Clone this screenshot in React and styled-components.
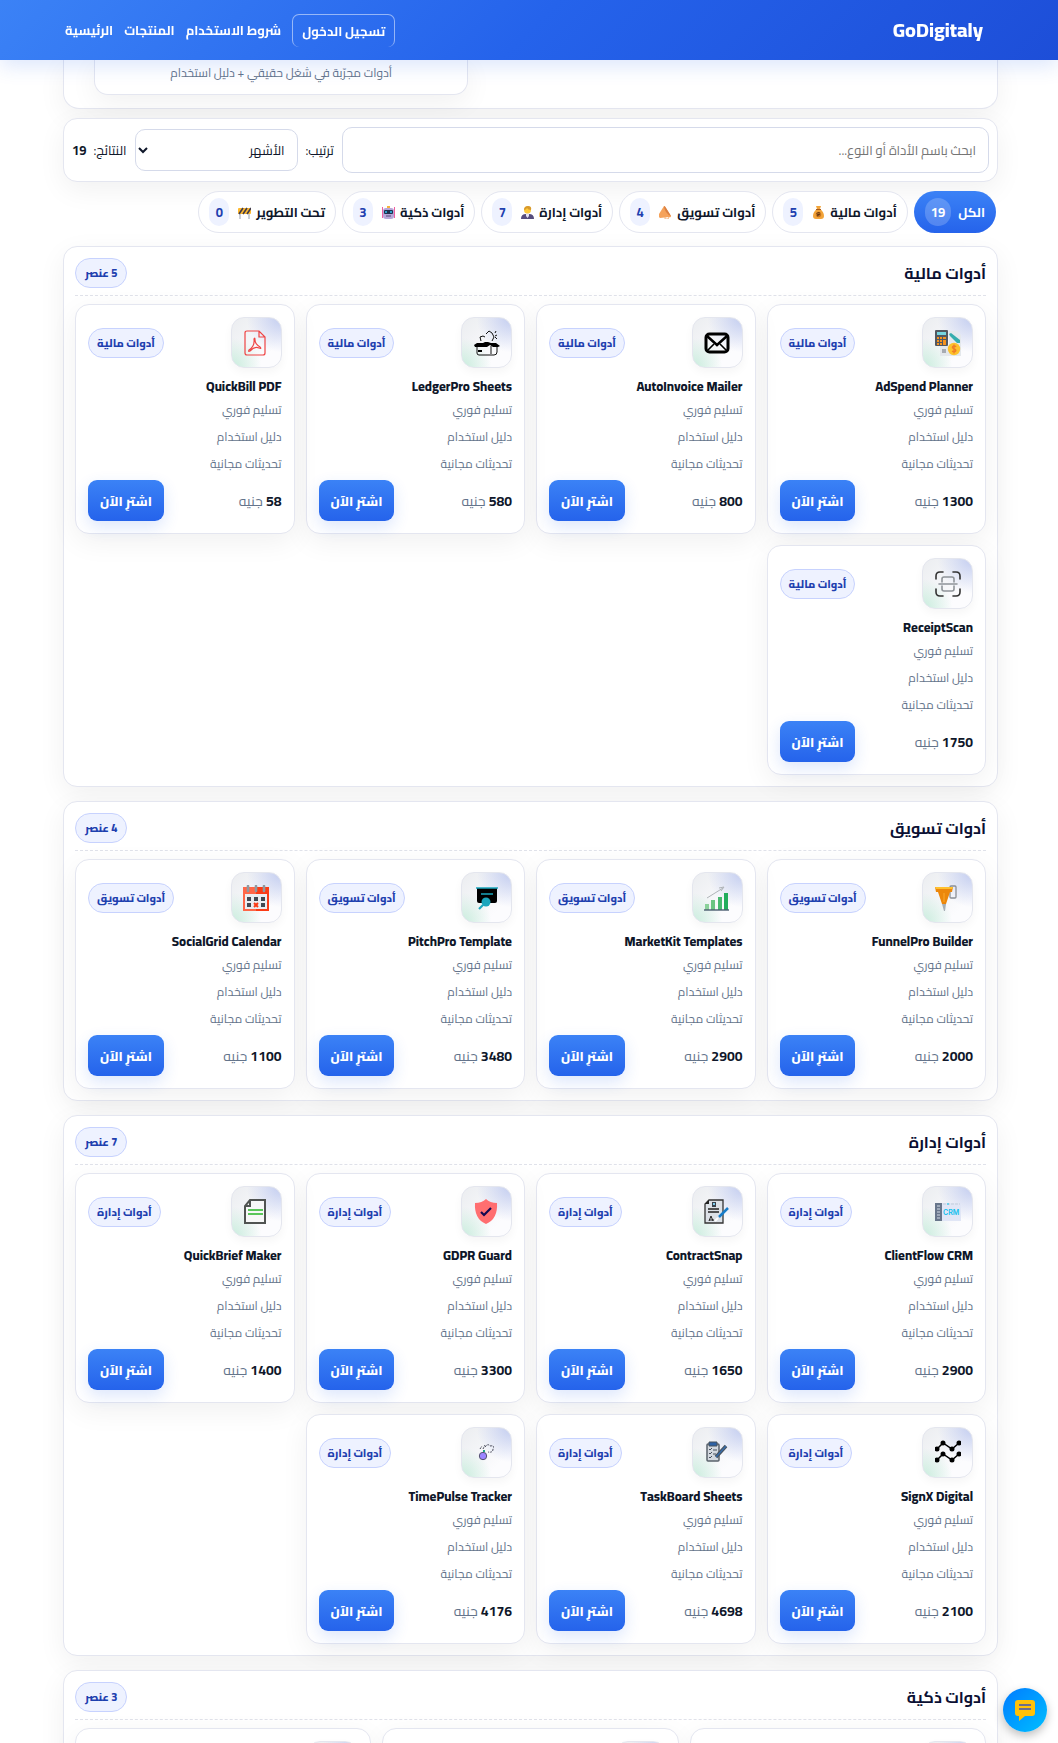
import React, { useState } from "react";
import styled, { createGlobalStyle, css } from "styled-components";

const GlobalStyle = createGlobalStyle`
  * { box-sizing: border-box; }
  body {
    margin: 0;
    background: #fff;
    color: #0f172a;
    font-family: Cairo, "Noto Sans Arabic", Roboto, "DejaVu Sans", sans-serif;
    font-size: 14px;
    line-height: 24px;
  }
  button, input, select { font: inherit; color: inherit; }
`;

// ── Page and header ──────────────────────────────────────────────────────────

const Page = styled.div`
  height: 100vh;
  overflow-y: auto;
  scrollbar-width: none;
`;

const Header = styled.header`
  position: sticky;
  top: 0;
  z-index: 5;
  height: 60px;
  padding: 0 75px 0 65px;
  display: flex;
  align-items: center;
  justify-content: space-between;
  background: linear-gradient(135deg, #3b82f6, #2563eb 50%, #1d4ed8);
  box-shadow: 0 6px 20px rgba(37, 99, 235, 0.16);
`;

const Brand = styled.a`
  color: #fff;
  font-size: 20px;
  font-weight: 800;
  line-height: 26px;
  text-decoration: none;
`;

const Nav = styled.nav`
  display: flex;
  flex-direction: row-reverse;
  align-items: center;
  gap: 11px;
`;

const NavLink = styled.a`
  color: #fff;
  font-size: 13px;
  font-weight: 700;
  text-decoration: none;
  white-space: nowrap;

  ${({ $boxed }) =>
    $boxed &&
    css`
      height: 33px;
      padding: 4px 9px;
      border: 1px solid rgba(255, 255, 255, 0.5);
      border-bottom: 0;
      border-radius: 7px;
    `}
`;

const Main = styled.main`
  display: flex;
  flex-direction: column;
  padding: 0 60px 24px 63px;
`;

// ── Hero ─────────────────────────────────────────────────────────────────────

const panel = css`
  background: #fff;
  border: 1px solid #e4e6f0;
  box-shadow: 0 8px 28px rgba(0, 0, 0, 0.06);
`;

const Hero = styled.section`
  ${panel}
  border-top: 0;
  border-radius: 0 0 16px 16px;
  padding: 0 30px 13px;
  display: grid;
  grid-template-columns: 4fr 3fr;
`;

const HeroNote = styled.p`
  ${panel}
  grid-column: 2;
  margin: 0;
  padding: 1px 12px 9px;
  border-top: 0;
  border-radius: 0 0 14px 14px;
  text-align: center;
  font-size: 12px;
  color: #64748b;
`;

// ── Toolbar and filters ──────────────────────────────────────────────────────

const Toolbar = styled.form`
  ${panel}
  margin-top: 9px;
  padding: 8px;
  display: flex;
  align-items: center;
  gap: 8px;
  border-radius: 14px;
  font-size: 13px;
  white-space: nowrap;
`;

const SearchBox = styled.input`
  flex: 1;
  min-width: 0;
  height: 46px;
  padding: 0 12px;
  border: 1px solid #d5daea;
  border-radius: 10px;
  background: #fff;

  &::placeholder { color: #757575; }
`;

const SortSelect = styled.select`
  width: 163px;
  height: 42px;
  padding: 0 8px;
  border: 1px solid #d5daea;
  border-radius: 10px;
  background: #fff;
`;

const Results = styled.span`
  display: flex;
  gap: 7px;
`;

const Filters = styled.div`
  display: flex;
  gap: 6px;
  margin: 9px 0 13px;
  padding: 0 2px;
`;

const Chip = styled.button`
  height: 42px;
  padding: 0 10px;
  display: flex;
  align-items: center;
  gap: 9px;
  border: 1px solid #e4e6f0;
  border-radius: 21px;
  background: #fff;
  font-size: 13px;
  font-weight: 700;
  white-space: nowrap;
  cursor: pointer;

  ${({ $active }) =>
    $active &&
    css`
      gap: 7px;
      border-color: transparent;
      color: #fff;
      background: linear-gradient(#3b82f6, #2563eb) border-box;
    `}
`;

const ChipLabel = styled.span`
  display: flex;
  align-items: center;
  gap: 5px;
`;

const ChipCount = styled.span`
  min-width: 20px;
  padding: 2px 6px;
  border-radius: 14px;
  font-size: 13px;
  text-align: center;
  color: ${({ $active }) => ($active ? "#fff" : "#1e40af")};
  background: ${({ $active }) => ($active ? "rgba(255, 255, 255, 0.2)" : "#eef2ff")};
`;

// ── Sections and cards ───────────────────────────────────────────────────────

const Section = styled.section`
  ${panel}
  padding: 11px;
  border-radius: 14px;

  & + & { margin-top: 14px; }
`;

const SectionHead = styled.div`
  display: flex;
  align-items: center;
  justify-content: space-between;
  padding-bottom: 7px;
  margin-bottom: 8px;
  border-bottom: 1px dashed #e0e2ea;
`;

const SectionTitle = styled.h2`
  margin: 0;
  font-size: 16px;
  font-weight: 700;
  color: #0b1033;
`;

const Badge = styled.span`
  padding: 2px 8px;
  border: 1px solid #c7d2fe;
  border-radius: 15px;
  background: #eef2ff;
  color: #1e40af;
  font-size: 11px;
  font-weight: 800;
  white-space: nowrap;
`;

const CountBadge = styled(Badge)`
  padding: 2px 9px;
`;

const Grid = styled.div`
  display: grid;
  grid-template-columns: repeat(auto-fit, minmax(210px, 1fr));
  gap: 11px;
`;

const Card = styled.article`
  ${panel}
  padding: 12px;
  border-radius: 14px;
`;

const Row = styled.div`
  display: flex;
  align-items: center;
  justify-content: space-between;
`;

const IconTile = styled.div`
  width: 51px;
  height: 51px;
  display: grid;
  place-items: center;
  border: 1px solid #e4e6ee;
  border-radius: 13px;
  background:
    radial-gradient(70% 70% at 100% 0, #c3cdf0, transparent),
    radial-gradient(60% 60% at 0 100%, #c9eddd, transparent),
    linear-gradient(135deg, #ebedf0, #fcfcfe 75%);
  box-shadow: 0 4px 10px rgba(0, 0, 0, 0.04);
`;

const CardTitle = styled.h3`
  margin: 8px 0 0;
  font-size: 13px;
  font-weight: 800;
  line-height: 20px;
`;

const Features = styled.ul`
  margin: 0 0 3px;
  padding: 0;
  list-style: none;
  font-size: 12px;
  line-height: 27px;
  color: #64748b;
`;

const Price = styled.span`
  font-size: 14px;
  color: #64748b;

  strong { color: #0f172a; }
`;

const BuyButton = styled.button`
  height: 41px;
  padding: 0 12px;
  border: 0;
  border-radius: 9px;
  background: linear-gradient(#3b82f6, #2563eb);
  box-shadow: 0 6px 16px rgba(37, 99, 235, 0.16);
  color: #fff;
  font-size: 13px;
  font-weight: 800;
  cursor: pointer;
`;

const ChatButton = styled.button`
  position: fixed;
  right: 11px;
  bottom: 11px;
  z-index: 6;
  width: 44px;
  height: 44px;
  display: grid;
  place-items: center;
  border: 0;
  border-radius: 50%;
  background: linear-gradient(135deg, #007bff, #00bfff);
  box-shadow: 0 4px 10px rgba(0, 0, 0, 0.25);
  cursor: pointer;
`;

// ── Filter icons (13 × 13 artwork) ───────────────────────────────────────────

const chipIcons = {
  money: (
    <>
      <path d="M4 0h5L8 3q4 3 4 7 0 3-3 3H4q-3 0-3-3 0-4 4-7z" fill="#f2a43a" />
      <path d="M4 3h5v1H4z" fill="#a85a1c" />
      <circle cx="6.500" cy="8.500" r="2.700" fill="#c9751f" />
      <path d="M8 7q-3-1-3 .5t2 1-2 1.500" fill="none" stroke="#5f3510" />
    </>
  ),
  megaphone: (
    <>
      <path d="M5 0q1 0 2 2l5 8q0 2-2 1L1 12q-2-1-1-4z" fill="#f5a25a" />
      <path d="M5 0q1 0 2 2l5 8q-3-1-5-4T5 0z" fill="#d97f42" />
      <path d="M6 11v2h3l1-2" fill="none" stroke="#f5b27a" />
    </>
  ),
  manager: (
    <>
      <path d="M0 13q0-5 5-5h3q5 0 5 5z" fill="#574d7d" />
      <path d="M5 7h3v3L6.500 12 5 10z" fill="#e5e3f2" />
      <circle cx="6.500" cy="4" r="3.500" fill="#ffca3a" />
      <path d="M3 4q0-4 4-4t3 4q-3 0-4-2-1 2-3 2z" fill="#d99a2b" />
    </>
  ),
  robot: (
    <>
      <path d="M0.500 1v11M12.500 1v11" stroke="#ef5da0" />
      <rect x="1" y="2" width="11" height="11" rx="3" fill="#b7a6d8" />
      <path d="M5 0h3v2H5z" fill="#f7b23b" />
      <rect x="2" y="4" width="9" height="4" rx="1" fill="#20304f" />
      <path d="M3 6h2m3 0h2" stroke="#35c3f3" strokeWidth="1.500" />
      <path d="M4 10h5" stroke="#574a78" />
    </>
  ),
  barrier: (
    <>
      <path d="M2 7v6M11 7v6" stroke="#b9bec7" strokeWidth="1.500" />
      <rect y="2" width="13" height="6" rx="1" fill="#ffb92e" />
      <path d="M1 8l4-6M5 8l4-6M9 8l4-6" stroke="#413c4c" strokeWidth="1.600" />
    </>
  ),
};

// ── Product icons (26 × 26 artwork) ──────────────────────────────────────────

const icons = {
  budget: (
    <>
      <path d="M14 1h8l4 4v21H5V15h9z" fill="#e4e8ec" />
      <rect width="13" height="16" rx="1" fill="#535860" />
      <path d="M2 2h9v3H2z" fill="#76d5df" />
      <path d="M2 7h2v2H2zm3 0h2v2H5zm3 0h3v2H8zM2 10h2v2H2zm3 0h2v2H5zm3 0h3v5H8zM2 13h2v2H2zm3 0h2v2H5z" fill="#f6931d" />
      <path d="M14 4l2-1 9 7v3h-3l-7-7z" fill="#35adae" />
      <path d="M7 20h4m-4 2h4" stroke="#6a6f78" />
      <circle cx="19" cy="19" r="6.200" fill="#fdc22c" />
      <path d="M21.200 16.700c-3-2-5.500 1-2.200 2.100 3.500 1 1.500 4-2 2.300M19 14.500v9" fill="none" stroke="#ef7d28" strokeWidth="1.400" />
    </>
  ),
  mail: (
    <g fill="none" stroke="#000" strokeWidth="3">
      <rect x="2" y="4" width="22" height="18" rx="3.500" />
      <path d="M3 6l10 9L23 6" strokeWidth="2.500" />
      <path d="M4 20l6-6m12 6l-6-6" strokeWidth="1.600" />
    </g>
  ),
  ledger: (
    <>
      <path d="M3 17v6q0 2 2 2h15q3 0 3-3v-5M17 16v8M7 11l-1-4 3-1 2 1m1-3l3-3 3 2 2 4-2 4M21 3l1-2m-1 5l2-1m-2 2l2 2" fill="none" stroke="#111" strokeWidth="1" />
      <path d="M0 15l3-2h6l2-1h3l3 1h5l4 3-2 1h-5l-3-2-3 2H1z" fill="#000" />
      <path d="M4 20h4v2H4z" fill="#000" />
    </>
  ),
  pdf: (
    <g fill="none" stroke="#ef4444" strokeWidth="1.200">
      <path d="M4 1h12l6 6v16q0 2-2 2H4q-2 0-2-2V3q0-2 2-2zM16 1v6h6" />
      <path d="M11 9q1-2 1 1 0 4 5 7 2 2-1 1-4-2-9 3-2 1-1-1 6-4 5-11z" />
    </g>
  ),
  scan: (
    <g fill="none" strokeWidth="1.600" strokeLinecap="round">
      <path d="M1 8V5q0-4 4-4h3m10 0h3q4 0 4 4v3m0 10v3q0 4-4 4h-3M8 25H5q-4 0-4-4v-3" stroke="#333" />
      <path d="M7 11V8q0-2 2-2h8q2 0 2 2v3M7 15v3q0 2 2 2h8q2 0 2-2v-3M4 13h18" stroke="#8f9499" />
    </g>
  ),
  funnel: (
    <>
      <rect x="15" y="1" width="6" height="12" rx="1" fill="none" stroke="#8b8f96" strokeWidth="1.300" />
      <path d="M0 2h18l-1 5h-2l-4 12H7L3 7H1z" fill="#ec870b" />
      <path d="M0 2h18l-1 2H1z" fill="#ffc12f" />
      <path d="M7 19h4l-1 7H9z" fill="#a6aeb5" />
      <path d="M9 8v9" stroke="#fba92c" />
    </>
  ),
  chart: (
    <>
      <path d="M1 19h4v6H1z" fill="#8ad19a" />
      <path d="M7 15h4v10H7z" fill="#6bc483" />
      <path d="M14 12h4v13h-4z" fill="#48b970" />
      <path d="M20 8h4v17h-4z" fill="#22ad5c" />
      <path d="M0 25h25" stroke="#4b5d70" strokeWidth="1.400" />
      <path d="M3 13l16-10m-4 0l5-1-3 4" fill="none" stroke="#afb4b8" />
    </>
  ),
  pitch: (
    <>
      <path d="M3 3h20v13q0 2-2 2H5q-2 0-2-2z" fill="#000" />
      <path d="M2 3h22M7 9h12" stroke="#1ba6bd" strokeWidth="1.500" />
      <circle cx="12" cy="17" r="4.500" fill="#1ba6bd" />
      <path d="M9 20l-4 4" stroke="#1ba6bd" strokeWidth="2.200" />
    </>
  ),
  calendar: (
    <>
      <path d="M0 2h26v24H0z" fill="#fb3c16" />
      <path d="M0 2h13v24H0z" fill="#ff6748" />
      <path d="M2 9h22v15H2z" fill="#ebeef1" />
      <path d="M4 12h4v4H4zm7 0h4v4h-4zm7 0h4v4h-4zM4 18h4v4H4zm14 0h4v4h-4z" fill="#414952" />
      <path d="M11 18l4 4m0-4l-4 4" stroke="#fb3c16" strokeWidth="2" />
      <path d="M5 1v5m8-5v5m8-5v5" stroke="#91999f" strokeWidth="2.600" strokeLinecap="round" />
    </>
  ),
  crm: (
    <>
      <path d="M7 4h19v18H7z" fill="#e1e6f6" />
      <path d="M0 4h7v18H0z" fill="#68768b" />
      <path d="M2 7h3m-3 3h3m-3 3h3m-3 3h3m-3 3h3" stroke="#d5dce7" />
      <path d="M8 5h17" stroke="#c1ccda" strokeDasharray="3 1" />
      <path d="M12 5h2" stroke="#11c6ef" />
      <text x="8" y="16" fontSize="7" fontWeight="600" fontFamily="Inter, sans-serif" fill="#10bfee">CRM</text>
    </>
  ),
  contract: (
    <>
      <path d="M5 1h14v23H1V5z" fill="#dce1e7" stroke="#333" strokeWidth="1.300" />
      <path d="M1 5l4-4v4z" fill="#222" />
      <path d="M8 3h4v5H8z" fill="#39444e" />
      <path d="M9 4h2v2H9z" fill="#7dcbed" />
      <path d="M4 10h11m-11 3h11" stroke="#222" strokeWidth="1.500" />
      <path d="M5 22l2-5 2 5m-4-1h5" fill="none" stroke="#222" />
      <path d="M15 18l9-9" stroke="#177cc8" strokeWidth="2.500" />
      <path d="M11 22l3-3" stroke="#fff" strokeWidth="2" />
    </>
  ),
  shield: (
    <>
      <path d="M12 0q4 4 11 4 1 16-11 21Q0 20 1 4q7 0 11-4z" fill="#ff6e70" />
      <path d="M7 13l3 3 7-7" fill="none" stroke="#120751" strokeWidth="2.200" />
    </>
  ),
  brief: (
    <>
      <path d="M7 1h15v23H2V7zM7 1v6H2" fill="#f7f8f8" stroke="#505452" strokeWidth="2" />
      <path d="M5 11h15M5 15h15" stroke="#27b526" strokeWidth="1.400" />
    </>
  ),
  nodes: (
    <g stroke="#000" strokeWidth="1.500" fill="none">
      <path d="M2 9l6-6 9 6 7-6M2 20l6-6 9 6 7-6" />
      <path d="M2 9h0M8 3h0M17 9h0M24 3h0M2 20h0M8 14h0M17 20h0M24 14h0" strokeWidth="5" strokeLinecap="round" />
    </g>
  ),
  board: (
    <>
      <rect x="3" y="4" width="12" height="17" rx="1" fill="#d3d8df" stroke="#59616b" strokeWidth="1.500" />
      <path d="M5 2h8v4H5z" fill="#2e62a5" stroke="#49525c" />
      <path d="M5 9l1 1 2-2m1 2h4m-8 3l1 1 2-2m1 2h3m-7 3l1 1 2-2" fill="none" stroke="#46505c" />
      <path d="M12 17l10-11" stroke="#49525c" strokeWidth="3.500" />
      <path d="M12 17l10-11" stroke="#386ca9" strokeWidth="1.500" />
    </>
  ),
  pulse: (
    <>
      <path d="M11 7q3-4 5-1 5-1 3 3 0 4-5 3M6 9l2-3m1 3l2-4" fill="none" stroke="#494b5a" strokeDasharray="2 1" />
      <circle cx="9" cy="16" r="3.700" fill="#9b85ff" stroke="#555270" />
      <path d="M10 10v2" stroke="#1fa889" strokeWidth="2" />
    </>
  ),
};

// ── Data ─────────────────────────────────────────────────────────────────────

const filters = [
  { label: "الكل", count: 19 },
  { label: "أدوات مالية", icon: "money", count: 5 },
  { label: "أدوات تسويق", icon: "megaphone", count: 4 },
  { label: "أدوات إدارة", icon: "manager", count: 7 },
  { label: "أدوات ذكية", icon: "robot", count: 3 },
  { label: "تحت التطوير", icon: "barrier", count: 0 },
];

const sections = [
  {
    title: "أدوات مالية",
    items: [
      { name: "AdSpend Planner", price: 1300, icon: "budget" },
      { name: "AutoInvoice Mailer", price: 800, icon: "mail" },
      { name: "LedgerPro Sheets", price: 580, icon: "ledger" },
      { name: "QuickBill PDF", price: 58, icon: "pdf" },
      { name: "ReceiptScan", price: 1750, icon: "scan" },
    ],
  },
  {
    title: "أدوات تسويق",
    items: [
      { name: "FunnelPro Builder", price: 2000, icon: "funnel" },
      { name: "MarketKit Templates", price: 2900, icon: "chart" },
      { name: "PitchPro Template", price: 3480, icon: "pitch" },
      { name: "SocialGrid Calendar", price: 1100, icon: "calendar" },
    ],
  },
  {
    title: "أدوات إدارة",
    items: [
      { name: "ClientFlow CRM", price: 2900, icon: "crm" },
      { name: "ContractSnap", price: 1650, icon: "contract" },
      { name: "GDPR Guard", price: 3300, icon: "shield" },
      { name: "QuickBrief Maker", price: 1400, icon: "brief" },
      { name: "SignX Digital", price: 2100, icon: "nodes" },
      { name: "TaskBoard Sheets", price: 4698, icon: "board" },
      { name: "TimePulse Tracker", price: 4176, icon: "pulse" },
    ],
  },
  { title: "أدوات ذكية", items: [{}, {}, {}] },
];

const features = ["تسليم فوري", "دليل استخدام", "تحديثات مجانية"];

// ── Components ───────────────────────────────────────────────────────────────

const ProductCard = ({ name, price, icon, category }) => (
  <Card>
    <Row>
      <IconTile>
        {icon && (
          <svg width="26" height="26" viewBox="0 0 26 26" direction="ltr" aria-hidden="true">
            {icons[icon]}
          </svg>
        )}
      </IconTile>
      {name && <Badge>{category}</Badge>}
    </Row>
    {name && (
      <>
        <CardTitle>{name}</CardTitle>
        <Features>
          {features.map((feature) => (
            <li key={feature}>{feature}</li>
          ))}
        </Features>
        <Row>
          <Price>
            <strong>{price}</strong> جنيه
          </Price>
          <BuyButton type="button">اشترِ الآن</BuyButton>
        </Row>
      </>
    )}
  </Card>
);

const App = () => {
  const [active, setActive] = useState("الكل");

  return (
    <Page dir="rtl" lang="ar">
      <GlobalStyle />
      <Header>
        <Brand href="#home">GoDigitaly</Brand>
        <Nav>
          <NavLink href="#home">الرئيسية</NavLink>
          <NavLink href="#products">المنتجات</NavLink>
          <NavLink href="#terms">شروط الاستخدام</NavLink>
          <NavLink href="#login" $boxed>تسجيل الدخول</NavLink>
        </Nav>
      </Header>

      <Main>
        <Hero>
          <HeroNote>أدوات مجرّبة في شغل حقيقي + دليل استخدام</HeroNote>
        </Hero>

        <Toolbar onSubmit={(e) => e.preventDefault()}>
          <SearchBox type="search" aria-label="ابحث" placeholder="ابحث باسم الأداة أو النوع..." />
          <label htmlFor="sort">ترتيب:</label>
          <SortSelect id="sort">
            <option>الأشهر</option>
          </SortSelect>
          <Results>
            النتائج: <strong>19</strong>
          </Results>
        </Toolbar>

        <Filters>
          {filters.map(({ label, icon, count }) => (
            <Chip
              key={label}
              type="button"
              $active={label === active}
              onClick={() => setActive(label)}
            >
              <ChipLabel>
                {label}
                {icon && (
                  <svg width="13" height="13" viewBox="0 0 13 13" aria-hidden="true">
                    {chipIcons[icon]}
                  </svg>
                )}
              </ChipLabel>
              <ChipCount $active={label === active}>{count}</ChipCount>
            </Chip>
          ))}
        </Filters>

        {sections.map(({ title, items }) => (
          <Section key={title}>
            <SectionHead>
              <SectionTitle>{title}</SectionTitle>
              <CountBadge>{items.length} عنصر</CountBadge>
            </SectionHead>
            <Grid>
              {items.map((item, i) => (
                <ProductCard key={item.name || i} category={title} {...item} />
              ))}
            </Grid>
          </Section>
        ))}
      </Main>

      <ChatButton type="button" aria-label="محادثة">
        <svg width="22" height="22" viewBox="0 0 22 22" aria-hidden="true">
          <path d="M4 1h14q3 0 3 3v10q0 3-3 3h-7l-6 5v-5H4q-3 0-3-3V4q0-3 3-3z" fill="#ffc107" />
          <path d="M5 6h12M5 10h12" stroke="#3f51b5" strokeWidth="1.300" />
        </svg>
      </ChatButton>
    </Page>
  );
};

export default App;
